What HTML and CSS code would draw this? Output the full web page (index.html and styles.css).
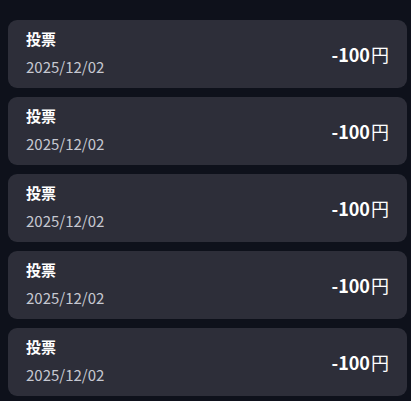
FILE: index.html
```html
<!DOCTYPE html>
<html lang="ja">
<head>
<meta charset="utf-8">
<link rel="stylesheet" href="styles.css">
</head>
<body>
<ul class="list">
  <li class="item"><div class="info"><div class="title">投票</div><div class="date">2025/12/02</div></div><div class="amount"><span class="num">-100</span><span class="yen">円</span></div></li>
  <li class="item"><div class="info"><div class="title">投票</div><div class="date">2025/12/02</div></div><div class="amount"><span class="num">-100</span><span class="yen">円</span></div></li>
  <li class="item"><div class="info"><div class="title">投票</div><div class="date">2025/12/02</div></div><div class="amount"><span class="num">-100</span><span class="yen">円</span></div></li>
  <li class="item"><div class="info"><div class="title">投票</div><div class="date">2025/12/02</div></div><div class="amount"><span class="num">-100</span><span class="yen">円</span></div></li>
  <li class="item"><div class="info"><div class="title">投票</div><div class="date">2025/12/02</div></div><div class="amount"><span class="num">-100</span><span class="yen">円</span></div></li>
</ul>
</body>
</html>
```

FILE: styles.css
```css
html, body {
  margin: 0;
  padding: 0;
  background: #0e111b;
  font-family: "Noto Sans CJK JP", "Noto Sans", sans-serif;
  color: #ffffff;
}
.list {
  list-style: none;
  margin: 0;
  padding: 20px 4px 0 8px;
  display: flex;
  flex-direction: column;
  gap: 9px;
}
.item {
  background: #2d2e39;
  border-radius: 9px;
  padding: 8px 18px 9px 18px;
  display: flex;
  align-items: center;
  justify-content: space-between;
}
.info {
  display: flex;
  flex-direction: column;
  gap: 5px;
}
.title {
  font-size: 15px;
  font-weight: 700;
  line-height: 22px;
}
.date {
  font-size: 15px;
  line-height: 24px;
  color: #c6c8d1;
}
.amount {
  display: flex;
  align-items: baseline;
  font-size: 18px;
  line-height: 24px;
}
.num {
  font-weight: 700;
}
.yen {
  font-weight: 400;
  margin-left: 1px;
}
```
